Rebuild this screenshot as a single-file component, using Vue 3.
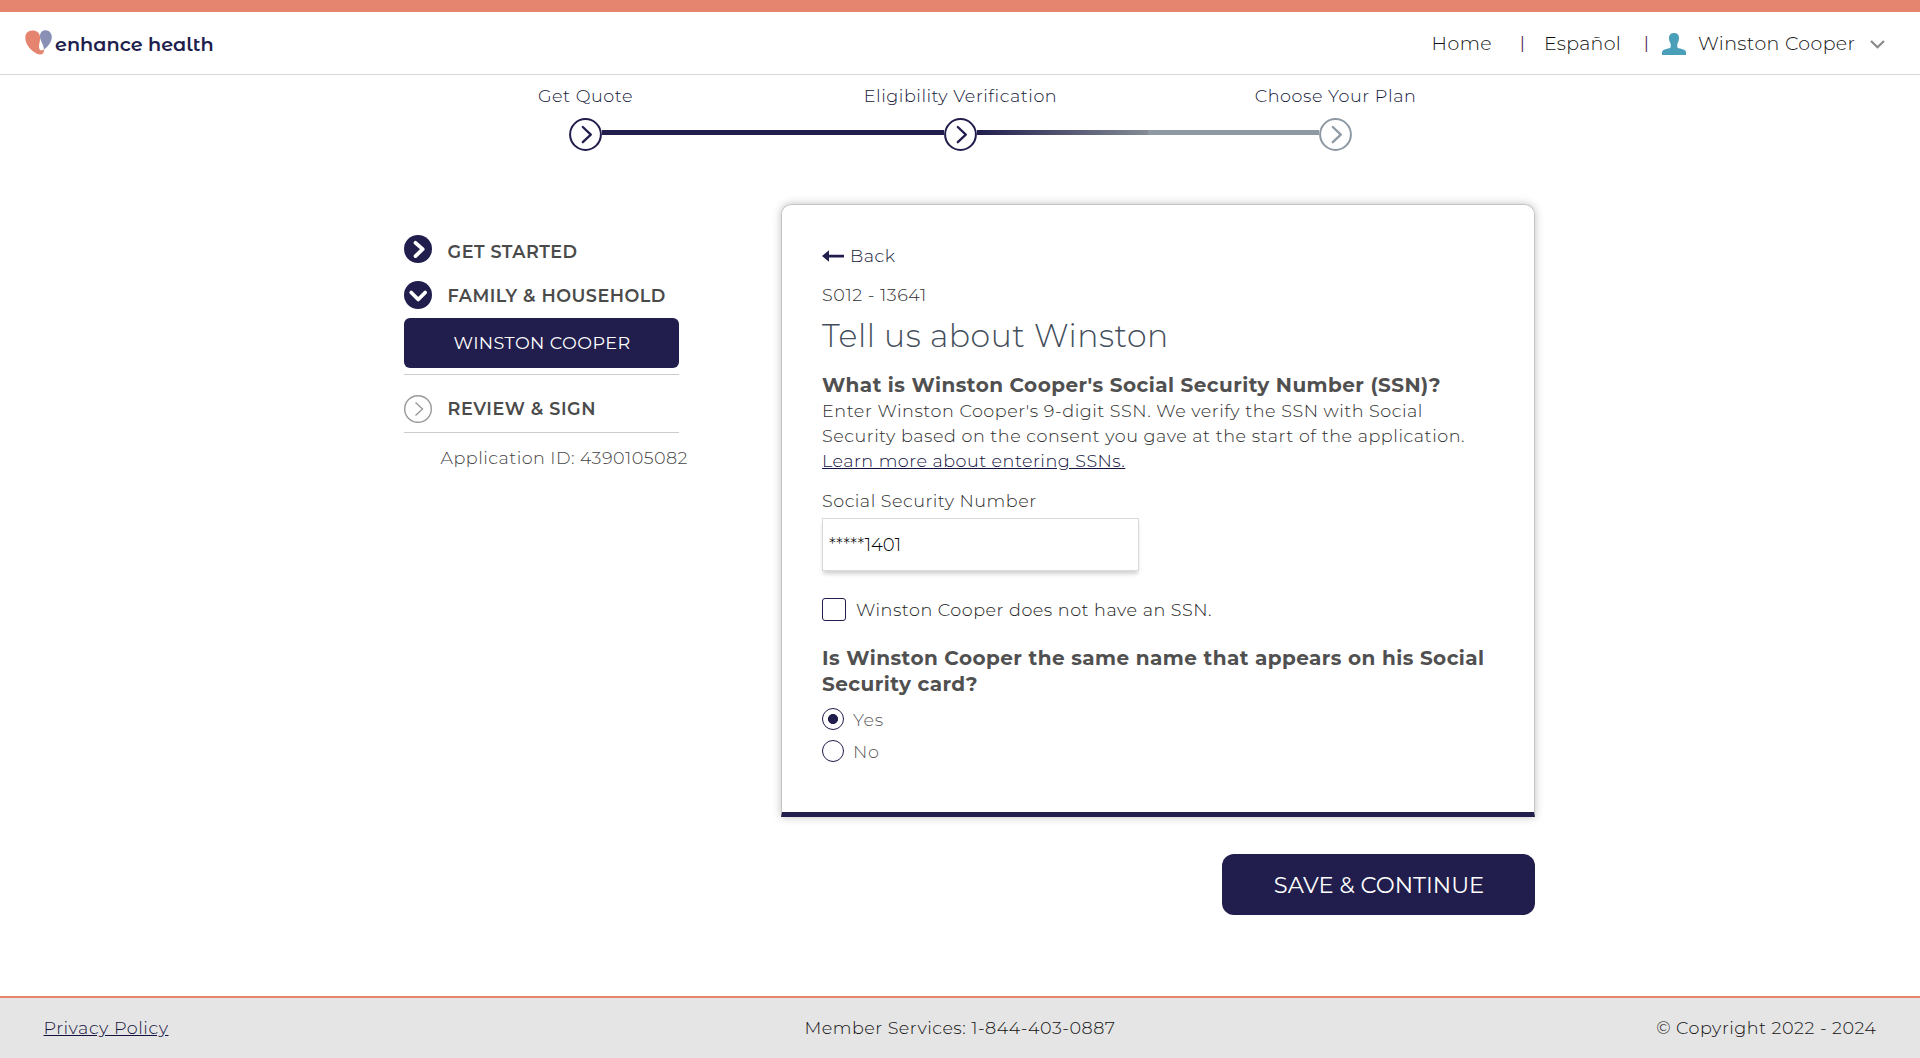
<script setup>
import { ref } from 'vue'

const steps = [
  { label: 'Get Quote', cls: 'step-quote' },
  { label: 'Eligibility Verification', cls: 'step-verify' },
  { label: 'Choose Your Plan', cls: 'step-plan' },
]
const ssn = ref('*****1401')
const noSsn = ref(false)
const sameName = ref('yes')
</script>

<template>
  <div class="page">
    <header class="header">
      <div class="brand">
        <svg width="28" height="26" viewBox="0 0 28 26">
          <path fill="#e58570" d="M7.500.500C3 .500.300 3.300.300 8c0 6 5.500 12.500 11.200 15.600 4.300 2.200 7.800.7 7.700-4.600-1.400 1.900-5.200 2.200-5.200-2 0-4.200 1.400-6.500 1.200-9.500C14.800 3 12 .500 7.500.500z" />
          <path fill="#8a90b5" d="M20.500.200c-3.500 0-5.600 2.700-5.500 6.200.1 4 3.400 7.600 4.100 13.200C23 16.500 26.800 12 26.800 7 26.800 3 24.200.2 20.500.2z" />
        </svg>
        <span class="logo">enhance health</span>
      </div>
      <nav class="nav">
        <a class="home">Home</a>
        <span class="bar bar-wide">|</span>
        <a class="lang">Español</a>
        <span class="bar">|</span>
        <svg class="person" width="24" height="22" viewBox="0 0 24 22">
          <path fill="#4a9fb9" d="M12 0c3.200 0 5 1.800 5 5 0 2.800-1 4.500-1.700 5.700v3.100c0 1 1 1.400 2.700 1.800 4 .8 6 1.800 6 4V22H0v-2.400c0-2.200 2-3.200 6-4 1.700-.4 2.700-.8 2.700-1.800v-3.100C8 9.500 7 7.800 7 5c0-3.200 1.800-5 5-5z" />
        </svg>
        <a class="user">Winston Cooper</a>
        <svg class="chevron" width="15" height="9" viewBox="0 0 15 9">
          <path fill="none" stroke="#8a8a8a" stroke-width="2.200" d="M1 1l6.500 6.300L14 1" />
        </svg>
      </nav>
    </header>

    <div class="labels">
      <span v-for="s in steps" :key="s.cls" :class="s.cls">{{ s.label }}</span>
    </div>
    <div class="track">
      <svg class="dot" viewBox="0 0 33 33"><circle cx="16.500" cy="16.500" r="15.400" /><path d="M13.800 9l8 7.600-8 7.600" /></svg>
      <i class="line done"></i>
      <svg class="dot" viewBox="0 0 33 33"><circle cx="16.500" cy="16.500" r="15.400" /><path d="M13.800 9l8 7.600-8 7.600" /></svg>
      <i class="line half"></i>
      <svg class="dot todo" viewBox="0 0 33 33"><circle cx="16.500" cy="16.500" r="15.400" /><path d="M13.800 9l8 7.600-8 7.600" /></svg>
    </div>

    <main class="main">
      <aside class="side">
        <div class="item first">
          <svg width="28" height="28" viewBox="0 0 28 28"><circle cx="14" cy="14" r="14" fill="#211e4d" /><path class="bold" d="M11.500 7.800l7.200 6.400-7.200 6.900" /></svg>
          <span class="started">GET STARTED</span>
        </div>
        <div class="item second">
          <svg width="28" height="28" viewBox="0 0 28 28"><circle cx="14" cy="14" r="14" fill="#211e4d" /><path class="bold" d="M7.200 11.500l7 7 7-7" /></svg>
          <span class="family">FAMILY &amp; HOUSEHOLD</span>
        </div>
        <button class="member">WINSTON COOPER</button>
        <div class="item third">
          <svg width="28" height="28" viewBox="0 0 28 28"><circle class="thin" cx="14" cy="14" r="13.300" /><path class="thin" d="M11.500 7.500l7 6.500-7 6.500" /></svg>
          <span class="review">REVIEW &amp; SIGN</span>
        </div>
        <div class="app-id">Application ID: 4390105082</div>
      </aside>

      <div class="content">
        <section class="card">
          <a class="back">
            <svg width="22" height="12" viewBox="0 0 22 12"><path fill="#211e4d" d="M0 6l7-5.700v4.400h15v2.700H7v4.400z" /></svg>
            <span>Back</span>
          </a>
          <div class="code">S012 - 13641</div>
          <h1 class="title">Tell us about Winston</h1>
          <h2 class="question ask-ssn">What is Winston Cooper's Social Security Number (SSN)?</h2>
          <p class="help">
            Enter Winston Cooper's 9-digit SSN. We verify the SSN with Social<br>
            Security based on the consent you gave at the start of the application.<br>
            <a class="learn">Learn more about entering SSNs.</a>
          </p>
          <label class="ssn-label" for="ssn">Social Security Number</label>
          <input id="ssn" v-model="ssn" class="ssn" type="text">
          <label class="check">
            <input v-model="noSsn" type="checkbox">
            <span>Winston Cooper does not have an SSN.</span>
          </label>
          <h2 class="question ask-name">
            Is Winston Cooper the same name that appears on his Social<br>Security card?
          </h2>
          <label class="radio"><input v-model="sameName" type="radio" value="yes"><span>Yes</span></label>
          <label class="radio"><input v-model="sameName" type="radio" value="no"><span>No</span></label>
        </section>
        <button class="save">SAVE &amp; CONTINUE</button>
      </div>
    </main>

    <footer class="footer">
      <a class="privacy">Privacy Policy</a>
      <span class="services">Member Services: 1-844-403-0887</span>
      <span class="copyright">© Copyright 2022 - 2024</span>
    </footer>
  </div>
</template>

<style>
body { margin: 0; background: #fff; }
</style>

<style scoped>
.page {
  box-sizing: border-box;
  height: 1058px;
  display: flex;
  flex-direction: column;
  font: 300 17.600px/20px Montserrat, Inter, sans-serif;
  letter-spacing: .530px;
  color: #2e2e2e;
  white-space: nowrap;
}
svg { display: block; flex: none; }
button { font-family: inherit; border: 0; padding: 0; background: #211e4d; color: #fff; font-weight: 400; }

.header {
  display: flex;
  justify-content: space-between;
  align-items: center;
  height: 62px;
  border-top: 12px solid #e58570;
  border-bottom: 1px solid #d6d6d6;
  padding: 0 35px 0 25px;
}
.brand { display: flex; align-items: center; }
.logo { margin: 2px 0 0 2px; font: 600 19.200px/26px "Montserrat Alternates", Montserrat, sans-serif; letter-spacing: 0; color: #211e4d; }
.nav { display: flex; align-items: center; padding-top: 1px; font-size: 19px; color: #111; }
.home { width: 88.500px; letter-spacing: .450px; }
.bar { width: 18px; font-size: 16px; font-weight: 400; color: #4b1550; }
.bar-wide { width: 24px; }
.lang { width: 100px; letter-spacing: .280px; }
.person { margin-right: 12px; }
.user { width: 172px; letter-spacing: .380px; }
.chevron { margin-top: 2px; }

.labels { display: flex; width: 1125px; margin: 11px 0 0 398px; color: #14183a; }
.labels span { width: 375px; text-align: center; letter-spacing: .550px; }
.labels .step-verify { letter-spacing: .520px; }
.track { display: flex; align-items: center; width: 783px; margin: 11.500px 0 0 569.400px; }
.dot { width: 33px; height: 33px; fill: none; stroke: #211e4d; stroke-width: 2; }
.dot path { stroke-width: 2.300; stroke-linecap: round; stroke-linejoin: round; }
.todo { stroke: #8e99a4; }
.line { flex: 1; height: 5px; margin-bottom: 3px; }
.done { background: #211e4d; }
.half { background: linear-gradient(90deg, #211e4d 0, #848b94 50%, #8e99a4 50%); }

.main { display: flex; gap: 102px; padding: 53.500px 0 0 404px; }
.side { width: 275px; padding-top: 25px; }
.item { display: flex; align-items: center; gap: 15.600px; font-weight: 600; color: #4a4a4a; }
.item .bold { fill: none; stroke: #fff; stroke-width: 3.700; stroke-linecap: round; stroke-linejoin: round; }
.item .thin { fill: none; stroke: #999; stroke-width: 1.400; }
.first { height: 45px; }
.first svg { margin-bottom: 4.500px; }
.second { height: 44px; }
.second svg { margin-bottom: 3px; }
.third { height: 47px; margin-top: 6px; padding-top: 10px; border-top: 1px solid #ccc; border-bottom: 1px solid #ccc; }
.started, .family { letter-spacing: .500px; }
.review { letter-spacing: .570px; }
.member { display: block; width: 275px; height: 50px; border-radius: 6px; padding: 0 0 1px 1px; font-size: 17.600px; letter-spacing: .400px; }
.app-id { margin-top: 15px; padding-left: 36.600px; letter-spacing: .460px; color: #444; }

.content { width: 754px; }
.card {
  box-sizing: border-box;
  height: 613px;
  padding: 40px 0 0 40px;
  border: 1px solid #c4c4c4;
  border-bottom: 5px solid #211e4d;
  border-radius: 10px 10px 0 0;
  box-shadow: 0 0 8px rgba(0, 0, 0, .25);
}
.back { display: flex; align-items: center; gap: 6px; height: 21px; color: #14183a; letter-spacing: .550px; }
.code { margin-top: 18px; line-height: 22px; letter-spacing: .550px; }
.title { margin: 10px 0 0; font: 300 31.500px/40px Montserrat, Inter, sans-serif; letter-spacing: .540px; color: #434e5b; }
.question { margin: 16px 0 0; font-size: 20px; line-height: 26px; font-weight: 700; color: #505050; }
.ask-ssn { letter-spacing: .440px; }
.help { margin: 0; line-height: 25px; }
.learn { letter-spacing: .480px; color: #14123f; text-decoration: underline; }
.ssn-label { display: block; margin-top: 18px; letter-spacing: .510px; }
.ssn {
  box-sizing: border-box;
  display: block;
  width: 317px;
  height: 53px;
  margin-top: 7px;
  padding: 0 6px;
  border: 1px solid #d8dadc;
  border-radius: 0;
  outline: none;
  box-shadow: 0 4px 4px -1px rgba(0, 0, 0, .18);
  font: 300 18px Montserrat, Inter, sans-serif;
  letter-spacing: 0;
  color: #000;
}
.check { display: flex; align-items: center; gap: 10px; height: 23px; margin-top: 27px; letter-spacing: .510px; color: #222; }
.check input { appearance: none; box-sizing: border-box; width: 24px; height: 23px; margin: 0; border: 1px solid #211e4d; border-radius: 3px; }
.ask-name { margin-top: 24px; letter-spacing: .450px; }
.radio { display: flex; align-items: center; gap: 9px; height: 22px; margin-top: 10.500px; font-size: 17.600px; letter-spacing: .600px; color: #5c5c5c; }
.radio input { appearance: none; box-sizing: border-box; width: 22px; height: 22px; margin: 0; border: 1px solid #211e4d; border-radius: 50%; }
.radio input:checked { background: radial-gradient(circle, #211e4d 4.700px, transparent 5.300px); }
.radio span { padding-top: 2px; }
.save { display: block; width: 313px; height: 61px; margin: 37px 0 0 auto; padding-left: 1px; border-radius: 12px; font-size: 22.600px; letter-spacing: 0; }

.footer {
  display: grid;
  grid-template-columns: 1fr auto 1fr;
  align-items: center;
  height: 60px;
  margin-top: auto;
  padding: 0 43.500px;
  border-top: 2px solid #e58570;
  background: #e5e5e5;
  color: #111;
}
.privacy { color: #14123f; letter-spacing: .530px; text-decoration: underline; }
.services { letter-spacing: .470px; }
.copyright { text-align: right; letter-spacing: .500px; }
</style>
